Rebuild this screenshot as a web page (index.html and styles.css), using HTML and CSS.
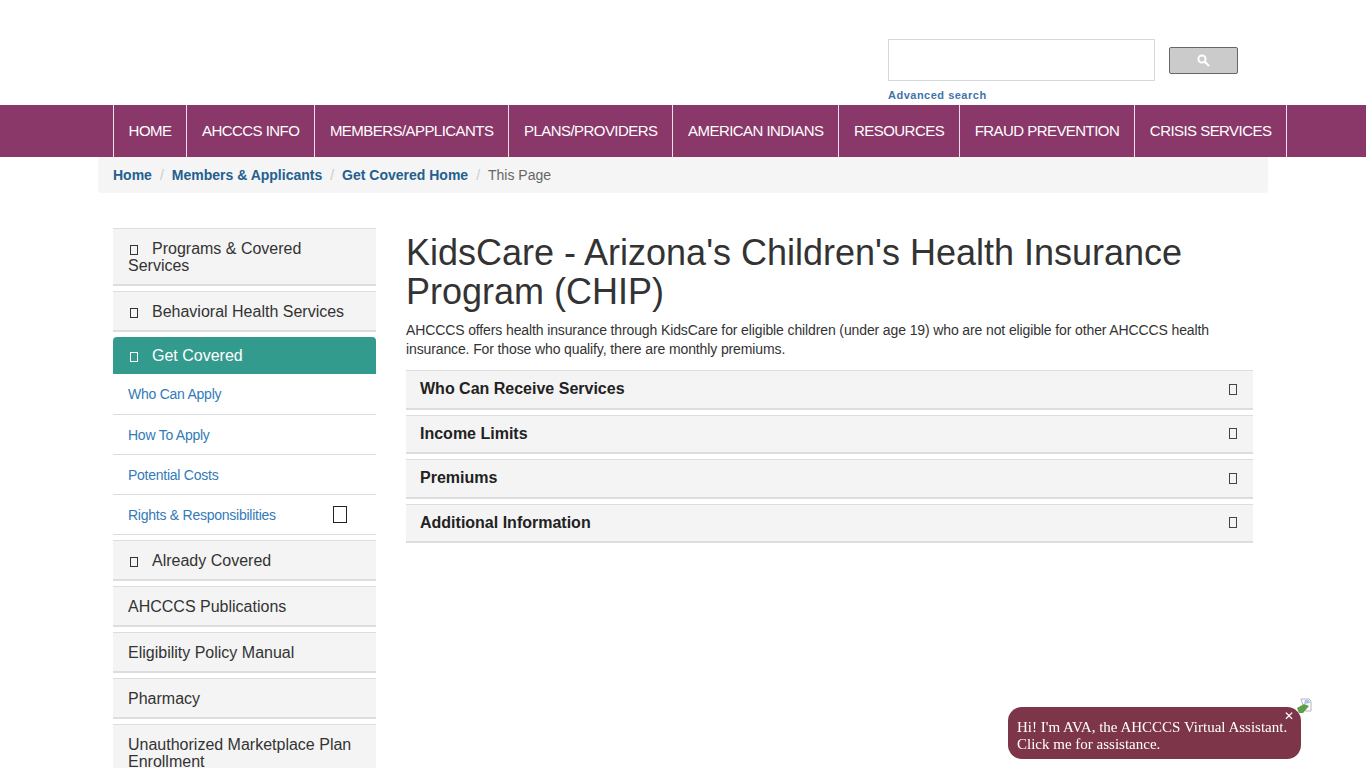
FILE: index.html
```html
<!DOCTYPE html>
<html lang="en">
<head>
    <meta charset="UTF-8">
    <meta name="viewport" content="width=device-width, initial-scale=1.0">
    <title>KidsCare - Arizona's Children's Health Insurance Program (CHIP)</title>
    <link rel="stylesheet" href="styles.css">
</head>
<body>
    <header class="top-header">
        <div class="search-box">
            <div class="search-row">
                <input type="text" class="search-input" aria-label="Search">
                <button type="button" class="search-btn" aria-label="Search">
                    <svg width="13" height="13" viewBox="0 0 13 13">
                        <circle cx="5" cy="5" r="3.6" fill="none" stroke="#fff" stroke-width="2"/>
                        <path d="M7.8 7.8 L12 12" stroke="#fff" stroke-width="2.2"/>
                    </svg>
                </button>
            </div>
            <a href="#" class="advanced-link">Advanced search</a>
        </div>
    </header>

    <nav class="main-nav">
        <ul class="nav-list">
            <li><a href="#">HOME</a></li>
            <li><a href="#">AHCCCS INFO</a></li>
            <li><a href="#">MEMBERS/APPLICANTS</a></li>
            <li><a href="#">PLANS/PROVIDERS</a></li>
            <li><a href="#">AMERICAN INDIANS</a></li>
            <li><a href="#">RESOURCES</a></li>
            <li><a href="#">FRAUD PREVENTION</a></li>
            <li><a href="#">CRISIS SERVICES</a></li>
        </ul>
    </nav>

    <ol class="breadcrumb">
        <li><a href="#">Home</a></li>
        <li><a href="#">Members &amp; Applicants</a></li>
        <li><a href="#">Get Covered Home</a></li>
        <li class="current">This Page</li>
    </ol>

    <div class="page-body">
        <aside class="sidebar">
            <a href="#" class="side-item"><span class="tofu"></span>Programs &amp; Covered Services</a>
            <a href="#" class="side-item"><span class="tofu"></span>Behavioral Health Services</a>
            <a href="#" class="side-item active"><span class="tofu"></span>Get Covered</a>
            <ul class="side-sub">
                <li><a href="#">Who Can Apply</a></li>
                <li><a href="#">How To Apply</a></li>
                <li><a href="#">Potential Costs</a></li>
                <li><a href="#">Rights &amp; Responsibilities</a><span class="tofu-big"></span></li>
            </ul>
            <a href="#" class="side-item"><span class="tofu"></span>Already Covered</a>
            <a href="#" class="side-item">AHCCCS Publications</a>
            <a href="#" class="side-item">Eligibility Policy Manual</a>
            <a href="#" class="side-item">Pharmacy</a>
            <a href="#" class="side-item">Unauthorized Marketplace Plan Enrollment</a>
        </aside>

        <main class="content">
            <h1>KidsCare - Arizona's Children's Health Insurance Program (CHIP)</h1>
            <p>AHCCCS offers health insurance through KidsCare for eligible children (under age 19) who are not eligible for other AHCCCS health insurance. For those who qualify, there are monthly premiums.</p>
            <div class="accordion">
                <div class="acc-row"><span>Who Can Receive Services</span><span class="tofu-acc"></span></div>
                <div class="acc-row"><span>Income Limits</span><span class="tofu-acc"></span></div>
                <div class="acc-row"><span>Premiums</span><span class="tofu-acc"></span></div>
                <div class="acc-row"><span>Additional Information</span><span class="tofu-acc"></span></div>
            </div>
        </main>
    </div>

    <div class="ava-bubble">
        <span class="ava-close">&#x2715;</span>
        Hi! I'm AVA, the AHCCCS Virtual Assistant.<br>Click me for assistance.
    </div>
    <svg class="ava-icon" width="16" height="16" viewBox="0 0 16 16">
        <path d="M5 1 H13 L15 3 V13 H9 Z" fill="#fff" stroke="#b5b5b5"/>
        <path d="M9 2 L13 2 L14 5 L8 6 Z" fill="#a9c4e8"/>
        <path d="M1 10 L8 6 L13 8 L7 15 H3 Z" fill="#5f9e46"/>
    </svg>
</body>
</html>
```

FILE: styles.css
```css
html, body {
    height: 768px;
    overflow: hidden;
}

body {
    margin: 0;
    padding: 0;
    font-family: "Liberation Sans", Arial, sans-serif;
    font-size: 14px;
    line-height: 20px;
    color: #333;
    background-color: #fff;
}

a {
    text-decoration: none;
}

ul, ol {
    margin: 0;
    padding: 0;
    list-style: none;
}

/* header */
.top-header {
    height: 105px;
    box-sizing: border-box;
    padding: 39px 0 0 888px;
}

.search-row {
    display: flex;
    align-items: center;
    gap: 14px;
}

.search-input {
    width: 267px;
    height: 42px;
    box-sizing: border-box;
    border: 1px solid #d3d9df;
    background: #fff;
    padding: 0 8px;
}

.search-btn {
    width: 69px;
    height: 27px;
    box-sizing: border-box;
    display: flex;
    align-items: center;
    justify-content: center;
    padding: 0;
    background: #cbcbcb;
    border: 1px solid #666;
    border-radius: 2px;
}

.advanced-link {
    display: block;
    margin-top: 6px;
    font-size: 11px;
    line-height: 16px;
    font-weight: bold;
    letter-spacing: 0.5px;
    color: #3f74ad;
}

/* nav */
.main-nav {
    height: 52px;
    background: #8a3769;
    padding-left: 113px;
}

.nav-list {
    display: flex;
    height: 52px;
    border-left: 1px solid #f0dfe9;
    width: fit-content;
}

.nav-list li {
    border-right: 1px solid #f0dfe9;
}

.nav-list a {
    display: block;
    padding: 0 15px 0 14.6px;
    line-height: 52px;
    font-size: 15px;
    letter-spacing: -0.55px;
    color: #fff;
}

.breadcrumb {
    display: flex;
    width: 1140px;
    height: 36px;
    margin-left: 98px;
    padding: 0 15px;
    background: #f5f5f5;
    border-radius: 0 0 4px 4px;
    line-height: 36px;
}

.breadcrumb li + li::before {
    content: "/";
    padding: 0 8px;
    color: #ccc;
}

.breadcrumb a {
    font-weight: bold;
    color: #23608f;
}

.breadcrumb .current {
    color: #666;
}

/* two columns */
.page-body {
    display: flex;
    gap: 30px;
    padding: 35px 113px 0;
}

.sidebar {
    width: 263px;
    flex-shrink: 0;
}

.side-item {
    display: block;
    margin-bottom: 5px;
    padding: 11px 15px 10px;
    background: #f4f4f4;
    border-top: 1px solid #ddd;
    border-bottom: 2px solid #ddd;
    font-size: 16px;
    line-height: 17px;
    color: #333;
}

.side-item.active {
    background: #339a8e;
    border: 0;
    border-radius: 4px 4px 0 0;
    padding: 10px 15px;
    margin-bottom: 0;
    color: #fff;
}

.tofu {
    display: inline-block;
    width: 8px;
    height: 10px;
    box-sizing: border-box;
    border: 1px solid currentColor;
    margin: 0 14px 0 2px;
    vertical-align: -1px;
}

.side-sub {
    margin-bottom: 5px;
}

.side-sub li {
    display: flex;
    align-items: center;
    justify-content: space-between;
    height: 40px;
    box-sizing: border-box;
    padding: 0 29px 0 15px;
    border-bottom: 1px solid #ddd;
}

.side-sub li:first-child {
    height: 41px;
}

.side-sub a {
    font-size: 14px;
    letter-spacing: -0.25px;
    color: #337ab7;
}

.tofu-big {
    width: 14px;
    height: 17px;
    box-sizing: border-box;
    border: 1px solid #222;
}

/* main column */
.content {
    width: 847px;
    padding-top: 5px;
}

h1 {
    margin: 0 0 10px;
    font-size: 36px;
    line-height: 39px;
    font-weight: normal;
    color: #333;
}

.content p {
    margin: 0 0 11px;
    letter-spacing: -0.12px;
    line-height: 19px;
}

.acc-row {
    display: flex;
    align-items: center;
    justify-content: space-between;
    height: 39.5px;
    box-sizing: border-box;
    margin-bottom: 5px;
    padding: 0 16px 0 14px;
    background: #f4f4f4;
    border-top: 1px solid #ddd;
    border-bottom: 2px solid #ddd;
    font-size: 16px;
    font-weight: bold;
    color: #222;
}

.tofu-acc {
    width: 8px;
    height: 11px;
    box-sizing: border-box;
    border: 1px solid #444;
}

/* assistant bubble */
.ava-bubble {
    position: fixed;
    left: 1008px;
    top: 707px;
    width: 293px;
    height: 52px;
    box-sizing: border-box;
    padding: 12px 0 0 9px;
    background: #7d3649;
    border-radius: 14px;
    font-family: "Liberation Serif", "Times New Roman", serif;
    font-size: 15px;
    line-height: 17px;
    white-space: nowrap;
    color: #fff;
}

.ava-close {
    position: absolute;
    right: 7px;
    top: 1px;
    font-family: "DejaVu Sans", sans-serif;
    font-size: 12px;
}

.ava-icon {
    position: fixed;
    left: 1296px;
    top: 698px;
}
```
